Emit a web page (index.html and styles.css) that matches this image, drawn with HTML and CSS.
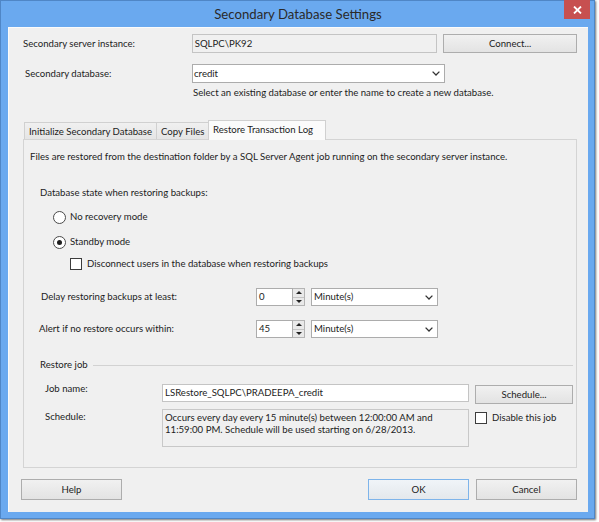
FILE: index.html
```html
<!DOCTYPE html>
<html>
<head>
<meta charset="utf-8">
<title>Secondary Database Settings</title>
<link rel="stylesheet" href="styles.css">
</head>
<body>
<div class="window">
  <div class="titlebar">
    <span class="title">Secondary Database Settings</span>
    <div class="close"><svg width="9" height="8" viewBox="0 0 9 8"><path d="M1 0.5 L8 7.5 M8 0.5 L1 7.5" stroke="#fff" stroke-width="1.8"/></svg></div>
  </div>
  <div class="client">
    <div class="row r1">
      <span class="lbl lbl-server">Secondary server instance:</span>
      <div class="field ro server">SQLPC\PK92</div>
      <div class="btn connect">Connect...</div>
    </div>
    <div class="row r2">
      <span class="lbl lbl-db">Secondary database:</span>
      <div class="combo dbcombo"><span class="ctext">credit</span><svg class="chev" width="8" height="5" viewBox="0 0 8 5"><polyline points="0.6,0.6 4,4 7.4,0.6" fill="none" stroke="#333" stroke-width="1.3"/></svg></div>
    </div>
    <div class="hint">Select an existing database or enter the name to create a new database.</div>

    <div class="tabs">
      <div class="tab t1">Initialize Secondary Database</div>
      <div class="tab t2">Copy Files</div>
      <div class="tab sel">Restore Transaction Log</div>
    </div>
    <div class="panel">
      <div class="p-info">Files are restored from the destination folder by a SQL Server Agent job running on the secondary server instance.</div>
      <div class="p-state">Database state when restoring backups:</div>
      <div class="opt radio-a"><span class="radio"></span><span>No recovery mode</span></div>
      <div class="opt radio-b"><span class="radio on"></span><span>Standby mode</span></div>
      <div class="opt check-row"><span class="check"></span><span>Disconnect users in the database when restoring backups</span></div>

      <div class="spin-row delay">
        <span class="slbl">Delay restoring backups at least:</span>
        <div class="spin"><div class="spin-field">0</div><div class="spin-btns"><span class="up"></span><span class="down"></span></div></div>
        <div class="combo unit"><span class="ctext">Minute(s)</span><svg class="chev" width="8" height="5" viewBox="0 0 8 5"><polyline points="0.6,0.6 4,4 7.4,0.6" fill="none" stroke="#333" stroke-width="1.3"/></svg></div>
      </div>
      <div class="spin-row alert">
        <span class="slbl">Alert if no restore occurs within:</span>
        <div class="spin"><div class="spin-field">45</div><div class="spin-btns"><span class="up"></span><span class="down"></span></div></div>
        <div class="combo unit"><span class="ctext">Minute(s)</span><svg class="chev" width="8" height="5" viewBox="0 0 8 5"><polyline points="0.6,0.6 4,4 7.4,0.6" fill="none" stroke="#333" stroke-width="1.3"/></svg></div>
      </div>

      <div class="group"><span>Restore job</span><span class="rule"></span></div>

      <div class="job-row">
        <span class="jlbl">Job name:</span>
        <div class="field jobname">LSRestore_SQLPC\PRADEEPA_credit</div>
        <div class="btn schedbtn">Schedule...</div>
      </div>
      <div class="sched-row">
        <span class="jlbl slabel">Schedule:</span>
        <div class="field ro schedtext">Occurs every day every 15 minute(s) between 12:00:00 AM and<br>11:59:00 PM. Schedule will be used starting on 6/28/2013.</div>
        <span class="check disable"></span><span class="disable-lbl">Disable this job</span>
      </div>
    </div>

    <div class="buttons">
      <div class="btn dlg help">Help</div>
      <div class="spacer"></div>
      <div class="btn dlg ok">OK</div>
      <div class="btn dlg cancel">Cancel</div>
    </div>
  </div>
</div>
</body>
</html>
```

FILE: styles.css
```css
* { box-sizing: border-box; }
html, body { margin: 0; padding: 0; }
body {
  background: #ffffff;
  width: 599px;
  height: 522px;
  overflow: hidden;
  font-family: Lato, "Liberation Sans", sans-serif;
  font-size: 9.6px;
  color: #1c1c1c;
}
.window {
  position: relative;
  width: 595px;
  height: 519px;
  background: #6aa9ef;
  border: 1px solid #4f86c6;
  padding: 0 6px 6px 7px;
  display: flex;
  flex-direction: column;
  box-shadow: 1px 1px 2px rgba(0,0,0,0.55);
}
.titlebar {
  height: 26px;
  display: flex;
  align-items: center;
  justify-content: center;
}
.title {
  font-size: 13.2px;
  color: #2a2a2a;
}
.close {
  position: absolute;
  top: -1px;
  right: 4px;
  width: 26px;
  height: 19px;
  background: #c75050;
  display: flex;
  align-items: center;
  justify-content: center;
}
.client {
  width: 580px;
  height: 485px;
  background: #f0f0f0;
  padding: 7px 11px 0 15px;
  box-shadow: inset 1px 1px 0 #fbfbfb;
}
.row { display: flex; }
.r1 { height: 19px; align-items: center; }
.lbl { line-height: 14px; }
.lbl-server { width: 169px; }
.field {
  height: 19px;
  border: 1px solid #c4c4c4;
  background: #fff;
  padding-left: 2px;
  display: flex;
  align-items: center;
  white-space: nowrap;
}
.field.ro { background: #f0f0f0; }
.server { width: 246px; }
.btn {
  height: 19px;
  border: 1px solid #adadad;
  background: linear-gradient(#f1f1f1, #e3e3e3);
  display: flex;
  align-items: center;
  justify-content: center;
}
.connect { margin-left: 6px; width: 134px; }
.r2 { margin-top: 11px; height: 19px; align-items: center; }
.lbl-db { margin-left: 2px; width: 167px; }
.combo {
  height: 19px;
  border: 1px solid #acacac;
  background: #fff;
  display: flex;
  align-items: center;
  padding: 0 4px 0 1px;
}
.ctext { flex: 1; }
.chev { display: block; }
.dbcombo { width: 253px; }
.hint { margin-top: 3px; margin-left: 170px; line-height: 14px; }

.tabs {
  margin-top: 20px;
  height: 20px;
  margin-bottom: -1px;
  display: flex;
  align-items: flex-end;
  padding-left: 1px;
  position: relative;
  z-index: 1;
}
.tab {
  height: 17px;
  margin-bottom: 1px;
  border: 1px solid #d0d0d0;
  border-bottom: none;
  background: linear-gradient(#f0f0f0, #e5e5e5);
  display: flex;
  align-items: center;
  padding-left: 4px;
  white-space: nowrap;
}
.t1 { width: 133px; }
.t2 { width: 52px; border-left: none; }
.sel {
  width: 118px;
  height: 20px;
  margin-bottom: 0;
  margin-left: -1px;
  background: #fbfbfb;
  padding-bottom: 2px;
}
.panel {
  width: 554px;
  height: 329px;
  border: 1px solid #d4d4d4;
  background: #f0f0f0;
  padding: 10px 0 0 6px;
  line-height: 14px;
}
.p-state { margin-top: 22px; margin-left: 10px; }
.opt { display: flex; align-items: center; height: 14px; }
.radio-a { margin-top: 10px; margin-left: 23px; }
.radio-b { margin-top: 11px; margin-left: 23px; }
.radio {
  width: 13px;
  height: 13px;
  border: 1px solid #4a4a4a;
  border-radius: 50%;
  background: #fff;
  margin-right: 4px;
  display: flex;
  align-items: center;
  justify-content: center;
}
.radio.on::after {
  content: "";
  width: 5px;
  height: 5px;
  border-radius: 50%;
  background: #1e1e1e;
}
.check-row { margin-top: 8px; margin-left: 40px; }
.check {
  width: 12px;
  height: 12px;
  border: 1px solid #3c3c3c;
  background: #fff;
  margin-right: 5px;
  flex: none;
}
.spin-row { display: flex; align-items: center; height: 18px; }
.delay { margin-top: 17px; }
.delay .slbl { margin-left: 11px; width: 215px; }
.alert { margin-top: 14px; }
.alert .slbl { margin-left: 9px; width: 217px; }
.spin { display: flex; height: 18px; }
.spin-field {
  width: 37px;
  height: 18px;
  border: 1px solid #acacac;
  background: #fff;
  padding-left: 2px;
  display: flex;
  align-items: center;
}
.spin-btns {
  width: 12px;
  height: 18px;
  border: 1px solid #b4b4b4;
  border-left: none;
  background: #e9e9e9;
  display: flex;
  flex-direction: column;
}
.spin-btns span {
  flex: 1;
  display: flex;
  align-items: center;
  justify-content: center;
}
.spin-btns .up { border-bottom: 1px solid #c4c4c4; }
.spin-btns .up::after {
  content: "";
  border-left: 3px solid transparent;
  border-right: 3px solid transparent;
  border-bottom: 3px solid #222;
}
.spin-btns .down::after {
  content: "";
  border-left: 3px solid transparent;
  border-right: 3px solid transparent;
  border-top: 3px solid #222;
}
.unit { width: 127px; height: 18px; margin-left: 6px; padding-left: 2px; }

.group {
  margin-top: 20px;
  margin-left: 10px;
  height: 14px;
  display: flex;
  align-items: center;
}
.rule {
  flex: 1;
  height: 1px;
  background: #d2d2d2;
  margin-left: 5px;
  margin-right: 3px;
}
.job-row { display: flex; margin-top: 10px; align-items: flex-start; }
.jlbl { margin-left: 15px; width: 117px; line-height: 14px; }
.jobname { width: 307px; height: 18px; margin-top: 2px; }
.schedbtn { width: 98px; margin-left: 6px; margin-top: 3px; }
.sched-row { display: flex; margin-top: 5px; align-items: flex-start; }
.slabel { margin-top: 1px; }
.schedtext {
  width: 307px;
  height: 38px;
  align-items: flex-start;
  line-height: 12px;
  padding: 2px 3px 0 2px;
  white-space: nowrap;
  border-color: #c8c8c8;
}
.disable { margin-left: 6px; margin-top: 3px; }
.disable-lbl { margin-top: 2px; }

.buttons { display: flex; margin-top: 11px; }
.spacer { flex: 1; }
.dlg { width: 101px; height: 21px; }
.help { margin-left: -2px; }
.ok { border-color: #7eb4ea; background: linear-gradient(#f0f4f8, #e4e8ec); }
.cancel { margin-left: 7px; }
```
